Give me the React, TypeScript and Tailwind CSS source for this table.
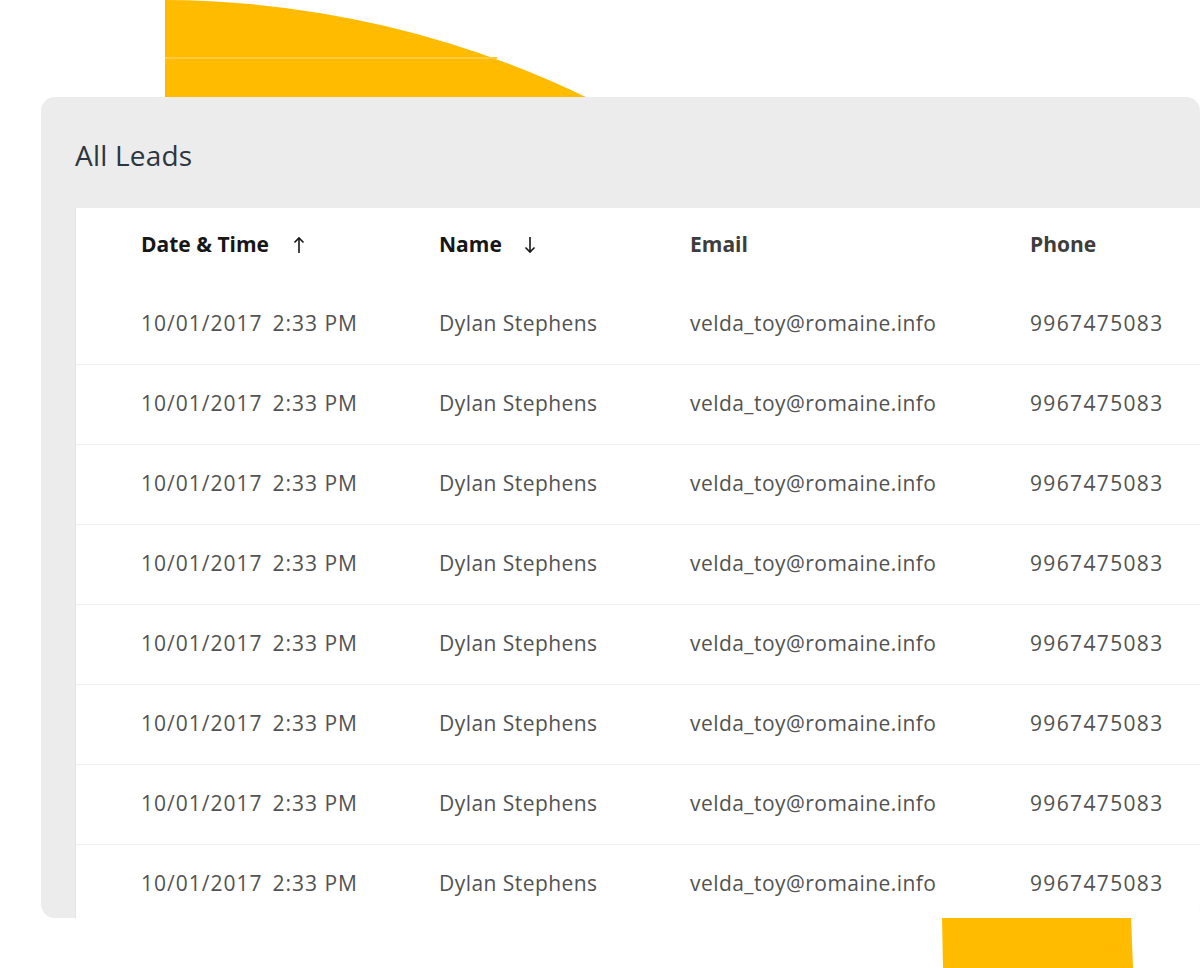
import React from 'react';

const rows = Array.from({ length: 8 }, () => ({
  date: '10/01/2017',
  time: '2:33 PM',
  name: 'Dylan Stephens',
  email: 'velda_toy@romaine.info',
  phone: '9967475083',
}));

function Arrow({ dir }: { dir: 'up' | 'down' }) {
  return (
    <svg width="12" height="18" viewBox="0 0 12 18" fill="none" stroke="currentColor" strokeWidth="1.6">
      {dir === 'up' ? (
        <>
          <path d="M6 17V2" />
          <path d="M1.5 6.5L6 2l4.5 4.5" />
        </>
      ) : (
        <>
          <path d="M6 1v15" />
          <path d="M1.5 11.5L6 16l4.5-4.5" />
        </>
      )}
    </svg>
  );
}

export default function App() {
  return (
    <div
      className="relative h-[968px] w-[1200px] overflow-hidden bg-white"
      style={{ fontFamily: '"Open Sans", "Noto Sans", sans-serif' }}
    >
      {/* decorative yellow shapes */}
      <svg className="absolute left-0 top-0" width="1200" height="100" viewBox="0 0 1200 100">
        <path d="M165 0 A979 979 0 0 1 592 100 L165 100 Z" fill="#ffbb00" />
        <rect x="165" y="57" width="332" height="2" fill="#ffc940" />
      </svg>
      <svg className="absolute left-0 top-[916px]" width="1200" height="52" viewBox="0 0 1200 52">
        <path d="M942 0 L1131 0 L1133 52 L943 52 Z" fill="#ffbb00" />
      </svg>

      <div className="relative ml-[41px] mt-[97px] flex h-[821px] w-[1159px] flex-col overflow-hidden rounded-[14px] bg-[#ececec]">
        <div className="flex h-[111px] shrink-0 items-center pl-[34px] pt-[4px]">
          <h1 className="text-[28px] font-medium tracking-[0.2px] text-[#2b3640]">All Leads</h1>
        </div>
        <div className="ml-[34px] flex-1 border-l border-[#e4e4e4] bg-white">
          <div className="flex h-[77px] items-center pb-[3px] pl-[65px] text-[21px] font-bold">
            <div className="flex w-[298px] items-center gap-[24px] text-[#161616]">
              Date &amp; Time <Arrow dir="up" />
            </div>
            <div className="flex w-[251px] items-center gap-[22px] text-[#161616]">
              Name <Arrow dir="down" />
            </div>
            <div className="w-[340px] text-[#3d3d3d]">Email</div>
            <div className="text-[#3d3d3d]">Phone</div>
          </div>
          {rows.map((r, i) => (
            <div
              key={i}
              className="flex h-[80px] items-center border-b border-[#efefef] pb-[2px] pl-[65px] text-[21px] text-[#525252]"
            >
              <div className="w-[298px] tracking-[1px]">
                {r.date}
                <span className="ml-[10px]">{r.time}</span>
              </div>
              <div className="w-[251px] tracking-[0.45px]">{r.name}</div>
              <div className="w-[340px] tracking-[0.45px]">{r.email}</div>
              <div className="tracking-[1.35px]">{r.phone}</div>
            </div>
          ))}
        </div>
      </div>
    </div>
  );
}
